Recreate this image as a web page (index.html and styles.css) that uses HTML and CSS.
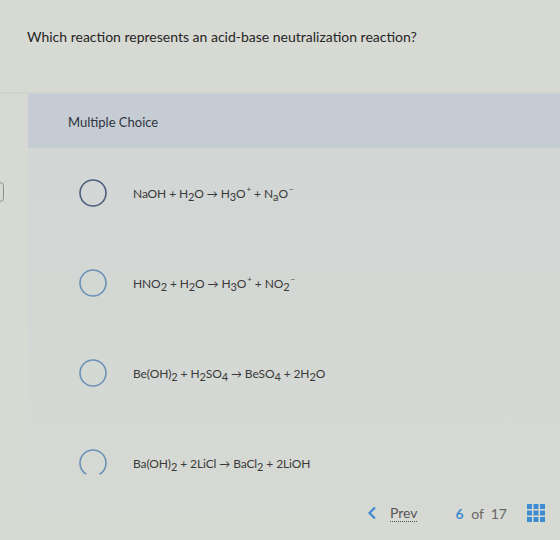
FILE: index.html
```html
<!DOCTYPE html>
<html lang="en">
<head>
  <meta charset="UTF-8" />
  <title>Question 6</title>
  <link rel="stylesheet" href="styles.css">
</head>
<body>
  <div class="side-tab"></div>
  <div class="question">
    <p class="prompt">Which reaction represents an acid-base neutralization reaction?</p>
  </div>
  <div class="answer-box">
    <div class="answer-head">Multiple Choice</div>
    <ul class="choices">
      <li class="choice">
        <svg class="radio dark" width="30" height="30" viewBox="0 0 30 30"><circle cx="15" cy="15" r="13" /></svg>
        <span class="formula">NaOH + H<sub>2</sub>O <span class="arrow">&rarr;</span> H<sub>3</sub>O<sup>+</sup> + N<sub>a</sub>O<sup>&minus;</sup></span>
      </li>
      <li class="choice">
        <svg class="radio" width="30" height="30" viewBox="0 0 30 30"><circle cx="15" cy="15" r="13" /></svg>
        <span class="formula">HNO<sub>2</sub> + H<sub>2</sub>O <span class="arrow">&rarr;</span> H<sub>3</sub>O<sup>+</sup> + NO<sub>2</sub><sup>&minus;</sup></span>
      </li>
      <li class="choice">
        <svg class="radio" width="30" height="30" viewBox="0 0 30 30"><circle cx="15" cy="15" r="13" /></svg>
        <span class="formula">Be(OH)<sub>2</sub> + H<sub>2</sub>SO<sub>4</sub> <span class="arrow">&rarr;</span> BeSO<sub>4</sub> + 2H<sub>2</sub>O</span>
      </li>
      <li class="choice">
        <svg class="radio open" width="30" height="30" viewBox="0 0 30 30"><circle cx="15" cy="15" r="13" /></svg>
        <span class="formula">Ba(OH)<sub>2</sub> + 2LiCl <span class="arrow">&rarr;</span> BaCl<sub>2</sub> + 2LiOH</span>
      </li>
    </ul>
  </div>
  <div class="pager">
    <a class="prev" href="#">
      <svg class="chev" width="10" height="14" viewBox="0 0 10 14"><path d="M8 1.5 L2.5 7 L8 12.5" /></svg>
      <span class="prev-label">Prev</span>
    </a>
    <span class="count"><b>6</b> of&nbsp; 17</span>
    <svg class="grid-icon" width="18" height="18" viewBox="0 0 18 18">
      <rect x="0" y="0" width="5" height="5" /><rect x="6.5" y="0" width="5" height="5" /><rect x="13" y="0" width="5" height="5" />
      <rect x="0" y="6.5" width="5" height="5" /><rect x="6.5" y="6.5" width="5" height="5" /><rect x="13" y="6.5" width="5" height="5" />
      <rect x="0" y="13" width="5" height="5" /><rect x="6.5" y="13" width="5" height="5" /><rect x="13" y="13" width="5" height="5" />
    </svg>
  </div>
</body>
</html>
```

FILE: styles.css
```css
body {
  margin: 0;
  background-color: #d7d9d3;
  font-family: Lato, "Open Sans", sans-serif;
  color: #2b2b2b;
  height: 540px;
  overflow: hidden;
}
.side-tab {
  position: absolute;
  left: -10px;
  top: 182px;
  width: 12px;
  height: 18px;
  border: 1px solid #8d918d;
  border-radius: 4px;
}
.question {
  height: 94px;
  padding: 0 0 0 27px;
  border-bottom: 2px solid #cfd2cd;
  box-sizing: border-box;
}
.prompt {
  margin: 0;
  padding-top: 28px;
  font-size: 14px;
  color: #262626;
}
.answer-box {
  margin-left: 28px;
  background: linear-gradient(180deg, #d1d6d6 0%, #d4d8d4 60%, #d6d9d3 100%);
}
.answer-head {
  height: 54px;
  padding-left: 40px;
  line-height: 56px;
  font-size: 13px;
  color: #2e3440;
  background-color: #c6ccd3;
}
.choices {
  list-style: none;
  margin: 0;
  padding: 0;
}
.choice {
  height: 90px;
  display: flex;
  align-items: center;
  padding-left: 50px;
}
.radio {
  flex: none;
  margin-right: 25px;
}
.radio circle {
  fill: none;
  stroke: #6b92b6;
  stroke-width: 1.6;
}
.radio.dark circle {
  stroke: #4d5f7e;
}
/* last ring is drawn with a gap at the bottom */
.radio.open circle {
  stroke-dasharray: 68 14;
  stroke-dashoffset: -27.4;
}
.formula {
  font-size: 12px;
  color: #3a3a3a;
  letter-spacing: -0.1px;
}
.formula sub {
  font-size: 11px;
  vertical-align: -3px;
  line-height: 0;
}
.formula sup {
  font-size: 8px;
  vertical-align: 6px;
  line-height: 0;
  margin-left: 1px;
}
.arrow {
  font-size: 11px;
}
.pager {
  display: flex;
  align-items: center;
  justify-content: flex-end;
  margin-top: -20px;
  padding: 16px 15px 0 0;
  font-size: 14px;
}
.prev {
  display: flex;
  align-items: center;
  color: #555;
  text-decoration: none;
  margin-right: 38px;
}
.chev {
  margin-right: 13px;
}
.chev path {
  fill: none;
  stroke: #3d8bd0;
  stroke-width: 2.2;
}
.prev-label {
  border-bottom: 1px dotted #555;
  line-height: 16px;
}
.count {
  color: #666;
  margin-right: 20px;
}
.count b {
  color: #3d8bd0;
  margin-right: 4px;
}
.grid-icon rect {
  fill: #3d8bd0;
}
```
